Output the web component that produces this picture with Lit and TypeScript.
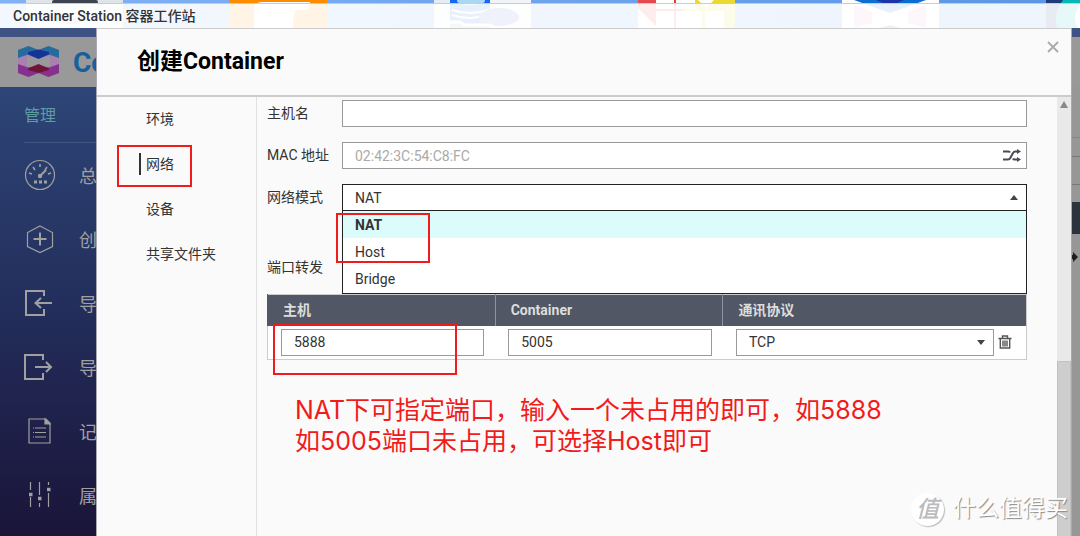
import { LitElement, html, css, svg } from "lit";
import { customElement, state } from "lit/decorators.js";

const TILES = [
  svg`<rect width="97" height="40" fill="#dfe4e8"/><rect x="26" width="46" height="4" rx="2" fill="#3c4452"/><path d="M32 14a17 17 0 0 0 28 0" fill="none" stroke="#aab2ba" stroke-width="6"/>`,
  svg`<rect width="97" height="40" fill="#fb8c00"/><path d="M24 40V9q0-7 8-7h48l-2 8H68q-3 0-4 5l-3 25z" fill="#fff"/>`,
  svg`<rect width="97" height="40" fill="#e3edf3"/><rect x="16" width="42" height="40" fill="#1766f0"/><ellipse cx="37" cy="1" rx="14" ry="4" fill="#a9d8f5"/><path d="M18 10q18 6 36 0M18 15q18 6 36 0" stroke="#fff" stroke-width="2" fill="none"/><path d="M56 0h41v40H56z" fill="#f0f4f8"/><ellipse cx="65" cy="17" rx="20" ry="9" fill="#5b74d6"/><path d="M14 26q0-4 4-4h8l5 3h24q4 0 4 5v12H14z" fill="#8fb2c4" stroke="#fff" stroke-width="3"/>`,
  svg`<rect width="97" height="40" fill="#fff"/><path d="M0 0h18v26L0 8z" fill="#e5484d"/><path d="M18 10h26M37 0v40" stroke="#e04030" stroke-width="2"/><path d="M57 0h40v40H57z" fill="#ecd92f"/><path d="M44 10h30" stroke="#e8d230" stroke-width="2"/><path d="M60 0h16l-8 8zM57 11h7v17h-7zM67 11h19v17H67z" fill="#fff"/>`,
  svg`<rect width="97" height="40" fill="#fff"/><path d="M12 0h72L48 13z" fill="#0a6fd0"/><path d="M34 0h28L48 6z" fill="#1a34a8"/><path d="M12 5l18 7v11L12 28zM84 5l-18 7v11l18 5z" fill="#e3a0d8"/><path d="M30 30l18-5 18 5" fill="#b04060"/>`,
  svg`<rect width="97" height="40" fill="#1d3c78"/><circle cx="42" cy="20" r="32" fill="#04b8b8"/><circle cx="46" cy="18" r="17" fill="#fff"/><path d="M36 24v-10h8" stroke="#80203c" stroke-width="3" fill="none"/>`,
];

const GAUGE = svg`<circle cx="16" cy="16" r="14.5"/><path d="M16 5v3M9 8l2 3M23 8l-2 3M5 14l3 1M27 14l-3 1" stroke-width="1.6"/><path d="M16 17l6-6" stroke-width="2"/><circle cx="16" cy="17" r="1.6" fill="currentColor"/><path d="M10 23h3M15 23h3M20 23h3" stroke-width="3"/>`;
const CREATE = svg`<path d="M16 3l12.500 6.500v14L16 29.500 3.500 23.500v-14z"/><path d="M16 9.500v13M9.500 16h13" stroke-width="2"/>`;
const IMPORT = svg`<path d="M20 9V4H2v24h18v-6" stroke-width="2"/><path d="M28 16H12M17 11l-5.500 5 5.500 5" stroke-width="2"/>`;
const EXPORT = svg`<path d="M19 9V4H1v24h18v-6" stroke-width="2"/><path d="M11 16h16M22 11l5 5-5 5" stroke-width="2"/>`;
const LOG = svg`<path d="M5 4h17l4 4v20H5z"/><path d="M21 4v5h5z" fill="currentColor"/><path d="M9 13h1M11 13h11M9 17.500h1M11 17.500h11M9 22h1M11 22h11"/>`;
const PREFS = svg`<path d="M6.500 3v8M6.500 18v10M15.500 3v13M15.500 24v4M24.500 3v3M24.500 14v14"/><path d="M5 15.500h3.500M14 19.500h3.500M23 10.500h3.500" stroke-width="3.500"/>`;

const MENU = [
  { icon: GAUGE, text: "总览" },
  { icon: CREATE, text: "创建" },
  { icon: IMPORT, text: "导入" },
  { icon: EXPORT, text: "导出" },
  { icon: LOG, text: "记录" },
  { icon: PREFS, text: "属性" },
];

const base = css`
  * { box-sizing: border-box; }
  button, input, select { font: inherit; color: inherit; margin: 0; border-radius: 0; }
  button { border: 0; padding: 0; background: none; }
  ul { list-style: none; margin: 0; padding: 0; }
  a { color: inherit; text-decoration: none; }
`;

@customElement("station-background")
class StationBackground extends LitElement {
  static styles = [base, css`
    :host { display: flex; flex-direction: column; flex: 1; }
    .strip { height: 9px; background: #3e5283; flex: none; }
    .brand { height: 50px; flex: none; background: #999; display: flex; align-items: center; gap: 14px; padding-left: 18px; }
    .logo { width: 41px; height: 32px; flex: none; }
    .name { font-size: 28px; font-weight: 700; color: #17609c; width: 24px; flex: none; overflow: hidden; }
    .lower { flex: 1; display: flex; }
    .side { width: 96px; overflow: hidden; flex: none; background: linear-gradient(#2d4577, #24305e 45%, #1a1439); color: #a0a0a0; }
    .group { margin: 0 0 0 24px; height: 56px; line-height: 57px; font-size: 16px; font-weight: 400; color: #5f9da3; border-bottom: 1px solid #40557f; }
    .item { height: 64px; display: flex; align-items: center; gap: 23px; padding-left: 24px; font-size: 18px; white-space: nowrap; overflow: hidden; }
    .item svg { width: 32px; height: 32px; flex: none; }
    .work { flex: 1; display: flex; flex-direction: column; align-items: flex-end; background: #979797; }
    .rule { width: 100%; border-bottom: 1px solid #777; }
    .r1 { height: 51px; border-color: #868686; }
    .r2 { height: 19px; }
    .r3 { height: 28px; }
    .bar { width: 100%; height: 32px; margin-top: 17px; background: #2d323f; }
    .arrow { width: 10px; height: 10px; margin-top: 18px; }
  `];
  render() {
    return html`
      <div class="strip"></div>
      <header class="brand">
        <svg class="logo" viewBox="0 0 41 32" aria-hidden="true">
          <path d="M0 4L10.500 0 20.500 4 30.500 0 41 4V27L30.500 31 20.500 27 10.500 31 0 27z" fill="#a782ae"/>
          <path d="M0 4L10.500 0 20.500 4 30.500 0 41 4V12L31 8.500 20.500 10 10 8.500 0 12z" fill="#256c9d"/>
          <path d="M0 18L10 21.500 20.500 20 31 21.500 41 18V27L30.500 31 20.500 27 10.500 31 0 27z" fill="#87318f"/>
          <path d="M9 10L20.500 12 32 10V21L20.500 19 9 21z" fill="#999"/>
          <path d="M10 6L20.500 3.500 31 6V8.500L20.500 13 10 8.500z" fill="#15349a"/>
          <path d="M10 22.500L20.500 18 31 22.500V24L20.500 27 10 24z" fill="#701538"/>
        </svg>
        <span class="name">Co</span>
      </header>
      <div class="lower">
        <nav class="side">
          <h2 class="group">管理</h2>
          <ul>
            ${MENU.map((m) => html`<li><a class="item" href="#">
              <svg viewBox="0 0 32 32" fill="none" stroke="currentColor" stroke-width="1.200" aria-hidden="true">${m.icon}</svg>${m.text}</a></li>`)}
          </ul>
        </nav>
        <div class="work">
          <div class="rule r1"></div><div class="rule r2"></div><div class="rule r3"></div>
          <div class="bar"></div>
          <svg class="arrow" viewBox="0 0 10 10" aria-hidden="true"><path d="M0 3h3V0l5 5-5 5V7H0z" fill="#1e1e1e"/></svg>
        </div>
      </div>`;
  }
}

@customElement("create-dialog")
class CreateDialog extends LitElement {
  @state() mode = "NAT";
  static styles = [base, css`
    :host { display: flex; flex-direction: column; background: #fafafa; color: #333; font-size: 14px; line-height: 20px; border-left: 1px solid #a8a8b0; border-right: 1px solid #aaa; }
    .head { display: flex; align-items: flex-start; justify-content: space-between; height: 69px; flex: none; padding: 0 12px 0 40px; border-top: 1px solid #ccc; border-bottom: 2px solid #ccc; }
    .title { margin: 0; color: #000; font-size: 23px; line-height: 66px; font-weight: 700; }
    .close { width: 12px; height: 12px; margin-top: 12px; }
    .close svg { display: block; width: 12px; height: 12px; }
    .body { flex: 1; min-height: 0; display: flex; }
    .nav { width: 160px; flex: none; border-right: 1px solid #e0e0e0; padding: 11px 0 0 42px; }
    .tab { display: block; height: 22px; line-height: 22px; margin-bottom: 23px; padding-left: 7px; position: relative; }
    .tab.on { border-left: 2px solid #333; padding-left: 5px; }
    .mark { position: absolute; border: 2px solid #f21b1b; pointer-events: none; z-index: 3; }
    .mark.tabmark { inset: -8px 64px -12px -24px; }
    .form { flex: 1; min-width: 0; padding: 3px 30px 0 10px; overflow: hidden; }
    .row { display: grid; grid-template-columns: 75px 1fr; margin-bottom: 15px; }
    .row label, .sub { line-height: 27px; }
    .field { position: relative; display: flex; }
    .box { width: 100%; height: 27px; border: 1px solid #999; background: #fff; padding: 0 12px; outline: 0; appearance: none; }
    .box::placeholder { color: #aaa; opacity: 1; }
    .box.open { border-color: #222; }
    .shuffle { position: absolute; right: 6px; top: 7px; width: 18px; height: 13px; }
    .shuffle svg { display: block; }
    .caret { position: absolute; right: 9px; top: 11px; width: 8px; height: 5px; pointer-events: none; }
    .list { position: absolute; z-index: 2; top: 26px; left: 0; right: 0; padding-bottom: 1px; background: #fff; border: 1px solid #222; }
    .opt { height: 27px; line-height: 28px; padding-left: 12px; }
    .opt.on { background: #dcfcfc; font-weight: 700; }
    .mark.listmark { left: -6px; top: 29px; width: 94px; height: 50px; }
    .sub { margin: 43px 0 13px; }
    .table { width: 100%; table-layout: fixed; border-collapse: collapse; background: #fff; border: 1px solid #ccc; }
    .table th { width: 30%; height: 31px; padding: 0 15px; text-align: left; font-weight: 700; color: #ddd; background: #515764; border-left: 1px solid #8c93a6; }
    .table th:first-child { border-left-color: #515764; }
    .table th:last-child { width: 40%; }
    .table td { padding: 3px 11px 3px 13px; }
    .table td:last-child { padding-right: 14px; }
    .cell { position: relative; display: flex; align-items: center; gap: 4px; }
    .pick { position: relative; flex: 1; display: flex; }
    .trash { width: 14px; height: 14px; }
    .trash svg { display: block; }
    .mark.cellmark { left: -8px; right: 27px; top: -5px; height: 51px; }
    .note { margin: 35px 0 0 28px; color: #f21b1b; font-family: Inter, "Noto Sans CJK SC", sans-serif; font-size: 25px; line-height: 31px; }
    .scroll { width: 14px; flex: none; background: #e9e9e9; display: flex; flex-direction: column; align-items: center; }
    .up { width: 8px; height: 7px; margin-top: 4px; flex: none; }
    .thumb { width: 14px; flex: 1; margin-top: 253px; background: #cecece; border: 1px solid #c0c0c0; border-bottom: 0; }
  `];
  render() {
    return html`
      <header class="head">
        <h1 class="title">创建Container</h1>
        <button class="close" aria-label="关闭"><svg viewBox="0 0 12 12"><path d="M1 1l10 10M11 1L1 11" stroke="#aaa" stroke-width="1.800"/></svg></button>
      </header>
      <div class="body">
        <nav class="nav">
          <a class="tab" href="#">环境</a>
          <a class="tab on" href="#">网络<span class="mark tabmark"></span></a>
          <a class="tab" href="#">设备</a>
          <a class="tab" href="#">共享文件夹</a>
        </nav>
        <main class="form">
          <div class="row"><label for="host">主机名</label><div class="field"><input class="box" id="host" /></div></div>
          <div class="row"><label for="mac">MAC 地址</label><div class="field">
            <input class="box" id="mac" placeholder="02:42:3C:54:C8:FC" />
            <button class="shuffle" aria-label="随机"><svg width="18" height="13" viewBox="0 0 18 13" fill="none" stroke="#4a4a55" stroke-width="2"><path d="M0 2.500h5.500q1 0 1.500 1M0 10.500h5q1.500 0 2.300-1.500L10 4q.8-1.500 2.300-1.500H15M10 9.500q.5 1 1.500 1H15"/><path d="M14 0l4 2.500L14 5zM14 8l4 2.500L14 13z" fill="#4a4a55" stroke="none"/></svg></button>
          </div></div>
          <div class="row"><label for="mode">网络模式</label><div class="field">
            <select class="box open" id="mode" .value=${this.mode}><option>NAT</option><option>Host</option><option>Bridge</option></select>
            <svg class="caret" viewBox="0 0 8 5"><path d="M0 5l4-5 4 5z" fill="#444"/></svg>
            <ul class="list" role="listbox" aria-label="网络模式">
              ${["NAT", "Host", "Bridge"].map((o) => html`<li class="opt ${o === this.mode ? "on" : ""}" role="option" @click=${() => (this.mode = o)}>${o}</li>`)}
            </ul>
            <span class="mark listmark"></span>
          </div></div>
          <div class="sub">端口转发</div>
          <table class="table">
            <thead><tr><th>主机</th><th>Container</th><th>通讯协议</th></tr></thead>
            <tbody><tr>
              <td><div class="cell"><input class="box" aria-label="主机" value="5888" /><span class="mark cellmark"></span></div></td>
              <td><div class="cell"><input class="box" aria-label="Container" value="5005" /></div></td>
              <td><div class="cell"><div class="pick"><select class="box" aria-label="通讯协议"><option>TCP</option><option>UDP</option></select>
                <svg class="caret" viewBox="0 0 8 5"><path d="M0 0l4 5 4-5z" fill="#444"/></svg></div>
                <button class="trash" aria-label="删除"><svg width="14" height="14" viewBox="0 0 14 14" fill="none" stroke="#555" stroke-width="1.400"><path d="M0.500 3.500h13M4.500 3V1h5v2M2.300 4v9h9.400V4M5 5.500v6M9 5.500v6M7 5.500v6"/></svg></button>
              </div></td>
            </tr></tbody>
          </table>
          <p class="note">NAT下可指定端口，输入一个未占用的即可，如5888<br />如5005端口未占用，可选择Host即可</p>
        </main>
        <div class="scroll">
          <svg class="up" viewBox="0 0 8 7"><path d="M0 7l4-7 4 7z" fill="#888"/></svg>
          <div class="thumb"></div>
        </div>
      </div>`;
  }
}

@customElement("app-root")
class AppRoot extends LitElement {
  static styles = [base, css`
    :host { display: flex; flex-direction: column; position: relative; height: 100vh; overflow: hidden; font-family: Roboto, "Noto Sans CJK SC", sans-serif; font-size: 14px; }
    .desk { height: 28px; flex: none; display: flex; gap: 107px; padding-left: 26px; overflow: hidden; background: linear-gradient(90deg, #82b2f6, #5a96e4); }
    .desk svg { width: 97px; height: 40px; flex: none; }
    .bar { position: absolute; inset: 3px 0 auto 0; height: 25px; padding-left: 13px; border-top: 1px solid #ccc; background: rgba(255, 255, 255, 0.9); color: #333; font-size: 14px; font-weight: 500; line-height: 25px; }
    .dialog { position: absolute; inset: 28px 8px 0 96px; }
    .water { position: absolute; right: 12px; bottom: 10px; display: flex; align-items: center; gap: 9px; font-size: 23px; line-height: 34px; color: #fff; text-shadow: 1px 1px 1px #888; }
    .seal { width: 33px; height: 33px; border-radius: 50%; background: #fff; color: #bbb; text-align: center; font-size: 23px; font-style: italic; font-weight: 500; box-shadow: 1px 1px 1px #bbb; text-shadow: none; }
  `];
  render() {
    return html`
      <div class="desk">${TILES.map((t) => html`<svg viewBox="0 0 97 40" aria-hidden="true">${t}</svg>`)}</div>
      <div class="bar">Container Station 容器工作站</div>
      <station-background></station-background>
      <create-dialog class="dialog"></create-dialog>
      <div class="water"><span class="seal">值</span><span>什么值得买</span></div>`;
  }
}
